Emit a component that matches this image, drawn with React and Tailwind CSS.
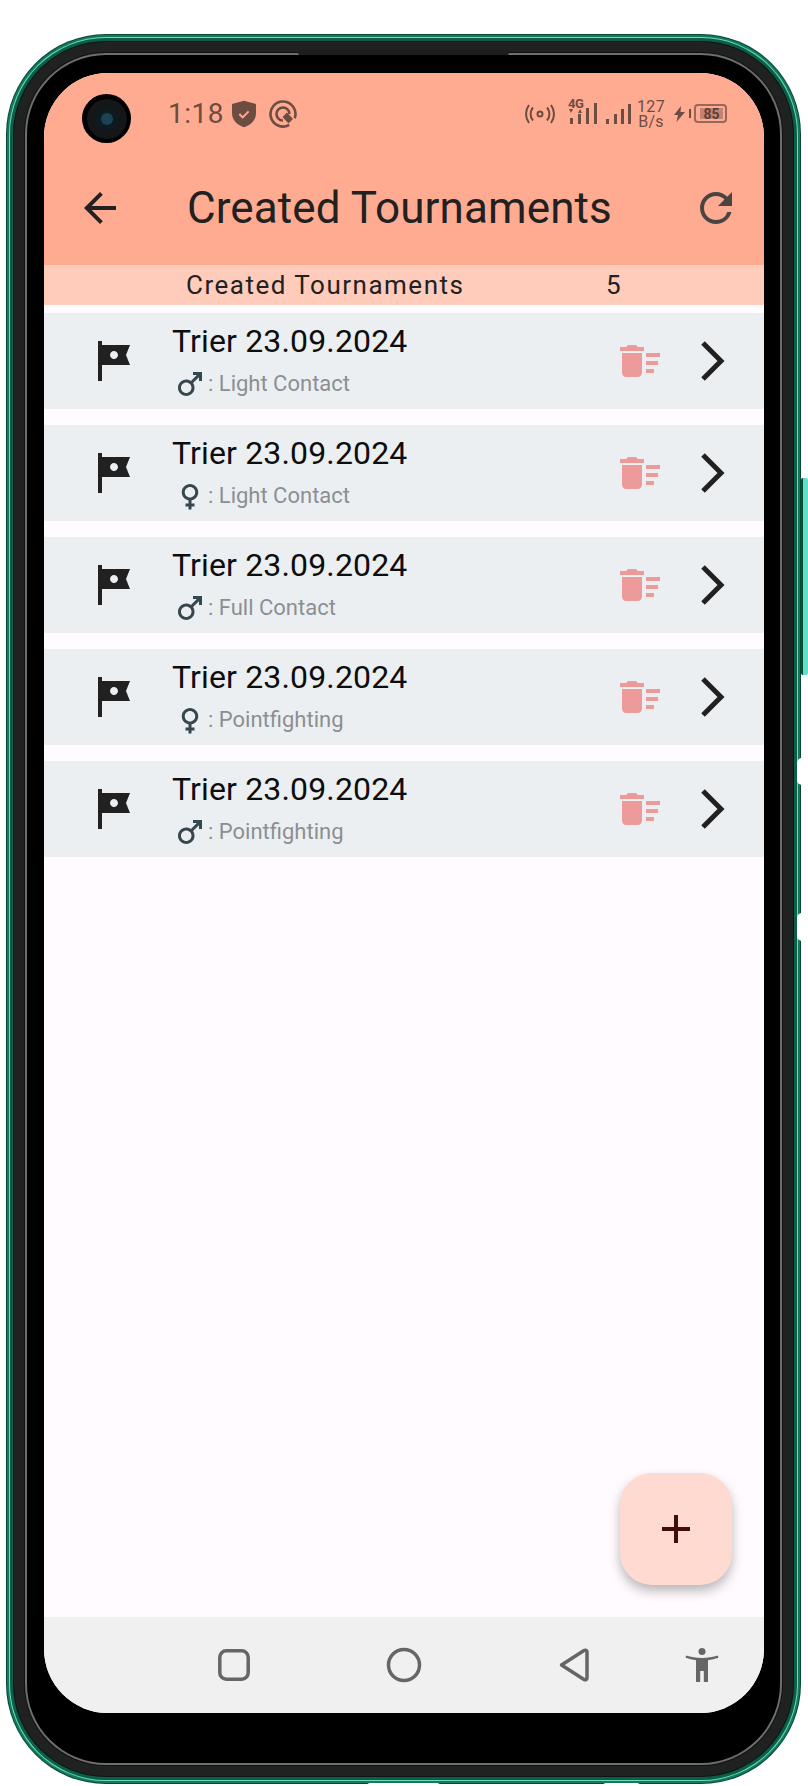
import React from 'react';
import { MdArrowBack, MdRefresh, MdTour, MdDeleteSweep, MdMale, MdFemale, MdAdd } from 'react-icons/md';

const tournaments = [
    { gender: 'm', label: 'Light Contact' },
    { gender: 'f', label: 'Light Contact' },
    { gender: 'm', label: 'Full Contact' },
    { gender: 'f', label: 'Pointfighting' },
    { gender: 'm', label: 'Pointfighting' },
];

const StatusBar = () => {
    return (
        <div className="h-[78px] pt-[3px] flex items-center pl-[124px] pr-[37px] text-[#6d4c41]">
            <span className="text-[28px] leading-none tracking-[0.5px]">1:18</span>
            <svg className="ml-[4px]" width="32" height="32" viewBox="0 0 24 24">
                <path fill="#6d4c41" d="M12 2 3 4.500v7c0 4.800 3.800 9 9 10.500 5.200-1.500 9-5.700 9-10.500v-7z" />
                <path fill="none" stroke="#ffab91" strokeWidth="1.500" d="m8.500 12 2.500 2.500 4.500-4.500" />
            </svg>
            <svg className="ml-[9px]" width="28" height="28" viewBox="0 0 28 28" fill="none" stroke="#6d4c41" strokeWidth="2.600">
                <path d="M20.250 24.800A12.500 12.500 0 1 1 25.700 18.300" />
                <path d="M14 20.500A6.500 6.500 0 1 1 20.500 14" />
                <path fill="#6d4c41" stroke="none" d="M18 12.500 24 19l-4.500 4.500-6-6.500z" />
            </svg>
            <svg className="ml-auto" width="30" height="20" viewBox="0 0 30 20" fill="none" stroke="#6d4c41" strokeWidth="2">
                <circle cx="15" cy="10" r="2.500" />
                <path d="M8 3.500a10 10 0 0 0 0 13M22 3.500a10 10 0 0 1 0 13" />
                <path d="M4 1a15 15 0 0 0 0 18M26 1a15 15 0 0 1 0 18" />
            </svg>
            <div className="relative ml-[13px] -mt-[4px] w-[64px] h-[26px]">
                <svg className="absolute left-0 top-0" width="64" height="26" viewBox="0 0 64 26" fill="#6d4c41">
                    <path d="m1 10 4 0-2 4zM10 14l4 0-2-4z" />
                    <rect x="2" y="19" width="3" height="6" />
                    <rect x="10" y="15" width="3" height="10" />
                    <rect x="18" y="9" width="3" height="16" />
                    <rect x="26" y="4" width="3" height="21" />
                    <rect x="38" y="20" width="3" height="5" />
                    <rect x="46" y="15" width="3" height="10" />
                    <rect x="53" y="10" width="3" height="15" />
                    <rect x="60" y="5" width="3" height="20" />
                </svg>
                <span className="absolute left-0 top-0 text-[13px] leading-[10px] font-bold tracking-[-0.5px]">4G</span>
            </div>
            <div className="ml-[6px] w-[26px] flex flex-col items-center text-[16px] leading-[15px] tracking-[0.3px]">
                <span>127</span>
                <span>B/s</span>
            </div>
            <svg className="ml-[10px]" width="11" height="16" viewBox="0 0 11 16" fill="#6d4c41">
                <path d="M7 0 0 9h4l-1.500 7L11 6H6.500z" />
            </svg>
            <div className="ml-[4px] w-[2px] h-[9px] bg-[#6d4c41]"></div>
            <div className="ml-[3px] w-[33px] h-[19px] border-2 border-[#6d4c41]/70 rounded-[4px] flex items-center pl-[4px]">
                <div className="w-[23px] h-[11px] bg-[#6d4c41]/40 flex items-center justify-center text-[14px] font-bold leading-none text-[#5d4037]">
                    85
                </div>
            </div>
        </div>
    );
};

const TournamentRow = ({ gender, label }) => {
    return (
        <div className="h-[96px] mb-[16px] bg-[#eceff1] flex items-center pl-[44px]">
            <MdTour size={48} color="#212121" />
            <div className="ml-[36px] flex-1">
                <div className="text-[32px] leading-[40px] tracking-[0.15px] text-[#0d0d0d]">Trier 23.09.2024</div>
                <div className="mt-[5px] h-[36px] flex items-center">
                    {gender === 'm' ? <MdMale size={36} color="#37474f" /> : <MdFemale size={36} color="#37474f" />}
                    <span className="text-[22px] text-[#8a8f93]">: {label}</span>
                </div>
            </div>
            <MdDeleteSweep size={48} color="#ef9a9a" />
            <svg className="ml-[23px] mr-[29px]" width="48" height="48" viewBox="0 0 48 48" fill="none" stroke="#212121" strokeWidth="5">
                <path d="M16 6l18 18-18 18" />
            </svg>
        </div>
    );
};

const NavBar = () => {
    return (
        <div className="h-[96px] bg-[#f0f0f0] flex items-center pl-[166px]">
            <svg width="48" height="48" viewBox="0 0 48 48" fill="none" stroke="#666666" strokeWidth="3.500">
                <rect x="9.800" y="9.800" width="28.400" height="28.400" rx="6.500" />
            </svg>
            <svg className="ml-[122px]" width="48" height="48" viewBox="0 0 48 48" fill="none" stroke="#666666" strokeWidth="3.500">
                <circle cx="24" cy="24" r="15.500" />
            </svg>
            <svg className="ml-[122px]" width="48" height="48" viewBox="0 0 48 48" fill="none" stroke="#666666" strokeWidth="3.500">
                <path strokeLinejoin="round" d="M11.500 24 34 9.500c1.500-.8 3 0 3 1.500v26c0 1.500-1.500 2.300-3 1.500z" />
            </svg>
            <svg className="ml-[80px]" width="48" height="48" viewBox="0 0 48 48" fill="#666666">
                <circle cx="24" cy="10.500" r="3.500" />
                <path d="M8 14.500c5 1.500 10.500 2.500 16 2.500s11-1 16-2.500l.4 2.300c-3.400 1.200-6.900 2-10.400 2.400V41h-4.200V30h-3.600v11H18V19.200c-3.500-.4-7-1.200-10.400-2.400z" />
            </svg>
        </div>
    );
};

const Screen = () => {
    return (
        <div className="h-[1640px] rounded-[64px] overflow-hidden relative flex flex-col bg-[#fffbfe] [font-family:Roboto,sans-serif]">
            <header className="bg-[#ffab91]">
                <StatusBar />
                <div className="h-[114px] flex items-center pl-[32px] pr-[24px]">
                    <MdArrowBack size={48} color="#212121" />
                    <h1 className="ml-[63px] text-[44px] font-normal text-[#212121] tracking-[0.1px] flex-1">Created Tournaments</h1>
                    <MdRefresh size={48} color="#4a4543" />
                </div>
            </header>
            <div className="h-[40px] bg-[#ffccbc] flex items-center pl-[142px] text-[26px] text-[#212121] tracking-[1.5px]">
                <span className="w-[420px]">Created Tournaments</span>
                <span>5</span>
            </div>
            <main className="flex-1 relative pt-[8px]">
                {tournaments.map((item, i) => (
                    <TournamentRow key={i} gender={item.gender} label={item.label} />
                ))}
                <button className="absolute right-[32px] bottom-[32px] w-[112px] h-[112px] rounded-[32px] bg-[#ffdad0] shadow-[0_6px_12px_rgba(0,0,0,0.28)] flex items-center justify-center">
                    <MdAdd size={48} color="#410e0b" />
                </button>
            </main>
            <NavBar />
            <div className="absolute left-[38px] top-[21px] w-[49px] h-[49px] rounded-full bg-black flex items-center justify-center">
                <div className="w-[40px] h-[40px] rounded-full bg-[#141617] flex items-center justify-center">
                    <div className="w-[22px] h-[22px] rounded-full bg-[#0c1b22] flex items-center justify-center">
                        <div className="w-[12px] h-[12px] rounded-full bg-[#1b4354]"></div>
                    </div>
                </div>
            </div>
        </div>
    );
};

export default function App() {
    return (
        <div className="relative w-[808px] h-[1786px] bg-white overflow-hidden pl-[6px] pt-[34px]">
            <div className="w-[795px] h-[1750px] rounded-[100px] bg-[#084a36] p-[1px]">
                <div className="h-full rounded-[99px] bg-[#137a5f] p-[2px]">
                    <div className="h-full rounded-[97px] bg-[#6fd8bd] p-[1px]">
                        <div className="h-full rounded-[96px] bg-[#0b5f46] p-[3px]">
                            <div className="h-full rounded-[93px] bg-[#0c1614] p-[1px]">
                                <div className="h-full rounded-[92px] bg-[#202222] p-[10px]">
                                    <div className="h-full rounded-[82px] bg-[#111111] p-[1px]">
                                        <div className="h-full rounded-[81px] bg-[#6e6e6e] p-[2px]">
                                            <div className="h-full rounded-[79px] bg-black pt-[18px] pl-[17px] pr-[16px]">
                                                <Screen />
                                            </div>
                                        </div>
                                    </div>
                                </div>
                            </div>
                        </div>
                    </div>
                </div>
            </div>
            {/* speaker slit */}
            <div className="absolute left-[298px] top-[50px] w-[211px] h-[5px] rounded-[2px] bg-[#1c1e1e]"></div>
            {/* side buttons */}
            <div className="absolute left-[801px] top-[478px] w-[7px] h-[197px] rounded-[2px] bg-[#5fe0cc] border-l-2 border-[#084a36]"></div>
            <div className="absolute left-[797px] top-[758px] w-[6px] h-[27px] rounded-l-[5px] bg-white"></div>
            <div className="absolute left-[797px] top-[913px] w-[6px] h-[28px] rounded-l-[5px] bg-white"></div>
            <div className="absolute left-[367px] top-[1783px] w-[73px] h-[3px] rounded-t-[3px] bg-white"></div>
            <div className="absolute left-[603px] top-[1783px] w-[37px] h-[3px] rounded-t-[3px] bg-white"></div>
        </div>
    );
}
